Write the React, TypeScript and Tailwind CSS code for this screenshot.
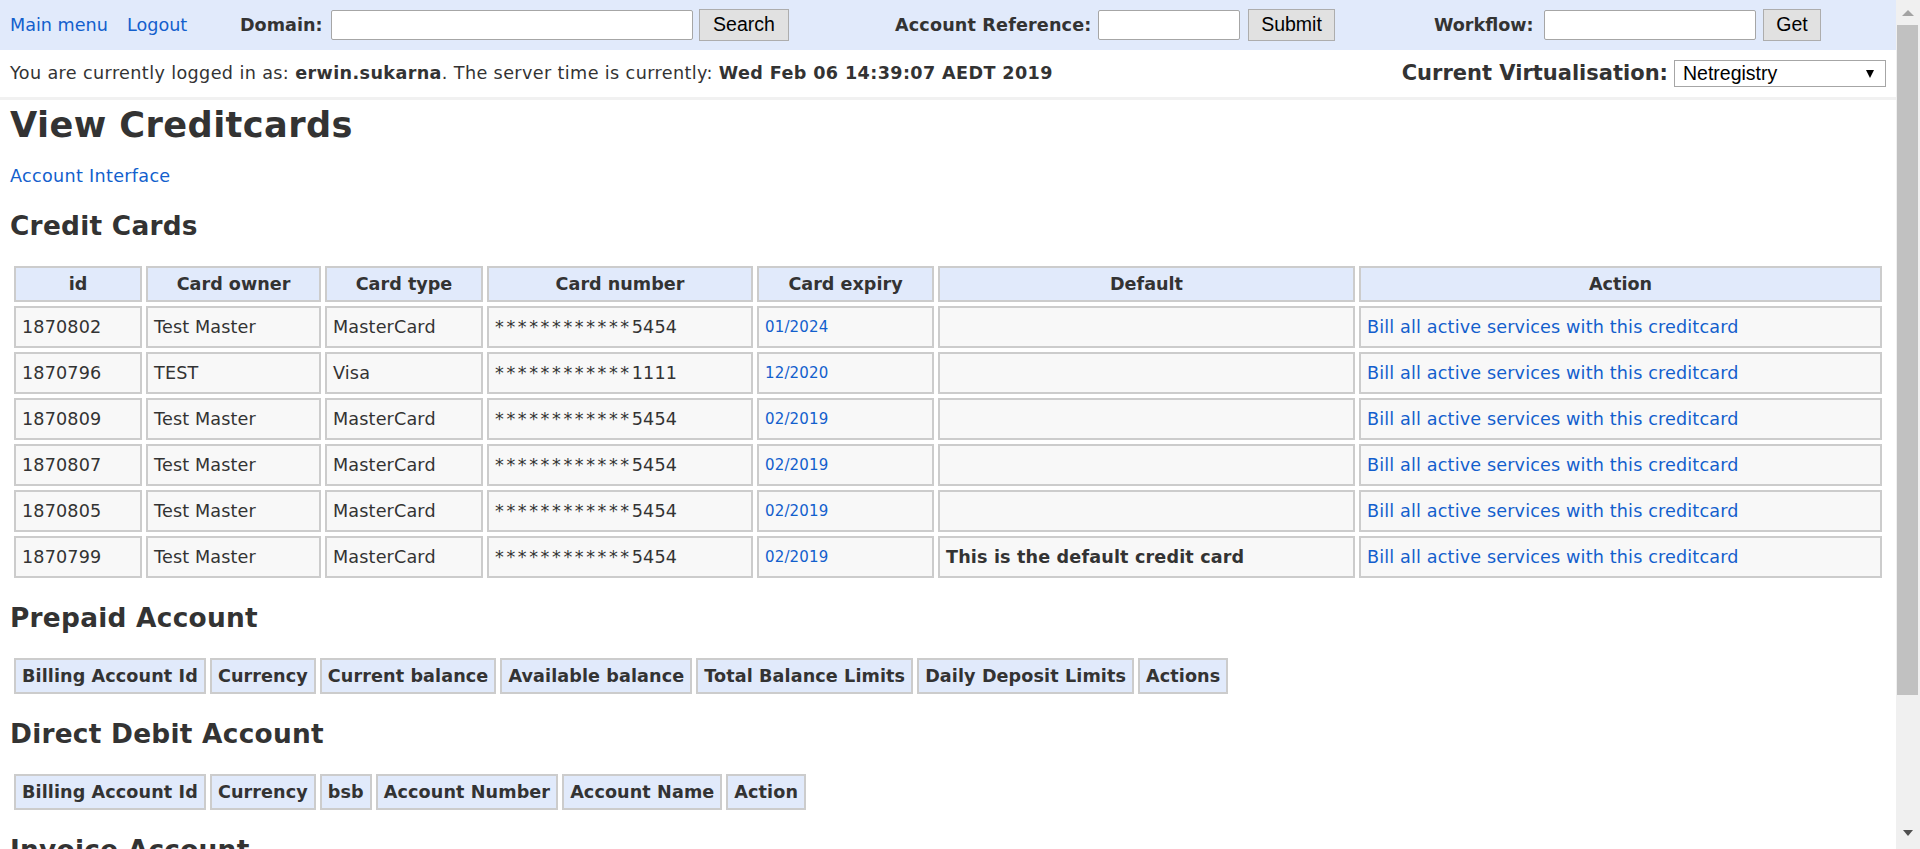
import React from "react";

const rows = [
  { id: "1870802", owner: "Test Master", type: "MasterCard", num: "5454", exp: "01/2024", def: "" },
  { id: "1870796", owner: "TEST", type: "Visa", num: "1111", exp: "12/2020", def: "" },
  { id: "1870809", owner: "Test Master", type: "MasterCard", num: "5454", exp: "02/2019", def: "" },
  { id: "1870807", owner: "Test Master", type: "MasterCard", num: "5454", exp: "02/2019", def: "" },
  { id: "1870805", owner: "Test Master", type: "MasterCard", num: "5454", exp: "02/2019", def: "" },
  { id: "1870799", owner: "Test Master", type: "MasterCard", num: "5454", exp: "02/2019", def: "This is the default credit card" },
];

const headers = ["id", "Card owner", "Card type", "Card number", "Card expiry", "Default", "Action"];

function HeadCell({ children }: { children: React.ReactNode }) {
  return (
    <div className="h-[36px] px-[6px] border-2 border-[#cccccc] bg-[#e1eafb] font-bold tracking-[0.1px] flex items-center whitespace-nowrap">
      {children}
    </div>
  );
}

function Button({ label, w }: { label: string; w: string }) {
  return (
    <div
      className={`${w} h-[32px] border border-[#adadad] bg-[#e1e1e1] flex items-center justify-center text-[19.5px] text-black`}
      style={{ fontFamily: '"Liberation Sans", Arial, sans-serif' }}
    >
      {label}
    </div>
  );
}

function Input({ w }: { w: string }) {
  return <div className={`${w} h-[30px] border border-[#a6a6a6] rounded-[2px] bg-white`} />;
}

const cell = "h-[42px] border-2 border-[#cccccc] bg-[#f8f8f8] px-[6px] flex items-center whitespace-nowrap tracking-[0.15px]";

export default function App() {
  return (
    <div
      className="flex w-[1920px] h-[849px] overflow-hidden bg-white text-[#333333] text-[17.6px]"
      style={{ fontFamily: '"DejaVu Sans", Verdana, sans-serif' }}
    >
      <div className="flex-1 min-w-0 h-[849px] overflow-hidden">
        {/* Top bar */}
        <div className="h-[50px] bg-[#e1eafb] flex items-center">
          <div className="w-[240px] pl-[10px] flex items-center whitespace-nowrap">
            <a className="w-[117px] text-[#135fcd]">Main menu</a>
            <a className="text-[#135fcd]">Logout</a>
          </div>
          <div className="w-[655px] flex items-center">
            <span className="w-[91px] font-bold whitespace-nowrap">Domain:</span>
            <Input w="w-[362px]" />
            <div className="w-[6px]" />
            <Button label="Search" w="w-[90px]" />
          </div>
          <div className="w-[539px] flex items-center">
            <span className="w-[203px] font-bold whitespace-nowrap tracking-[0.15px]">Account Reference:</span>
            <Input w="w-[142px]" />
            <div className="w-[8px]" />
            <Button label="Submit" w="w-[87px]" />
          </div>
          <div className="flex items-center">
            <span className="w-[110px] font-bold whitespace-nowrap">Workflow:</span>
            <Input w="w-[212px]" />
            <div className="w-[7px]" />
            <Button label="Get" w="w-[58px]" />
          </div>
        </div>

        {/* Login info line */}
        <div className="h-[50px] px-[10px] flex items-center justify-between border-b-[3px] border-[#f1f1f1]">
          <div className="whitespace-nowrap tracking-[0.38px]">
            You are currently logged in as: <b>erwin.sukarna</b>. The server time is currently:{" "}
            <b>Wed Feb 06 14:39:07 AEDT 2019</b>
          </div>
          <div className="flex items-center">
            <span className="font-bold text-[21px] whitespace-nowrap">Current Virtualisation:</span>
            <div
              className="ml-[6px] w-[212px] h-[27px] border border-[#a6a6a6] bg-white flex items-center justify-between pl-[8px] pr-[11px] text-[19.5px] text-black"
              style={{ fontFamily: '"Liberation Sans", Arial, sans-serif' }}
            >
              <span>Netregistry</span>
              <svg width="8" height="8" viewBox="0 0 8 8">
                <polygon points="0,0 8,0 4,8" fill="#000" />
              </svg>
            </div>
          </div>
        </div>

        <div className="px-[10px]">
          <h1 className="mt-[3px] text-[35.2px] leading-[43px] font-bold tracking-[0.4px]">View Creditcards</h1>
          <p className="mt-[20px] leading-[21px]">
            <a className="text-[#135fcd] tracking-[0.3px]">Account Interface</a>
          </p>
          <h2 className="mt-[23px] text-[26.4px] leading-[32px] font-bold tracking-[0.25px]">Credit Cards</h2>

          <div className="mt-[24px] mx-[4px] grid grid-cols-[128px_175px_158px_266px_177px_417px_523px] gap-[4px]">
            {headers.map((h) => (
              <div
                key={h}
                className="h-[36px] border-2 border-[#cccccc] bg-[#e1eafb] font-bold flex items-center justify-center whitespace-nowrap"
              >
                {h}
              </div>
            ))}
            {rows.map((r) => (
              <React.Fragment key={r.id}>
                <div className={cell}>{r.id}</div>
                <div className={cell}>{r.owner}</div>
                <div className={cell}>{r.type}</div>
                <div className={cell}>
                  <span className="tracking-[2.6px]">************</span>
                  <span>{r.num}</span>
                </div>
                <div className={cell}>
                  <a className="text-[#135fcd] text-[15px]">{r.exp}</a>
                </div>
                <div className={`${cell} font-bold`}>{r.def}</div>
                <div className={cell}>
                  <a className="text-[#135fcd]">Bill all active services with this creditcard</a>
                </div>
              </React.Fragment>
            ))}
          </div>

          <h2 className="mt-[24px] text-[26.4px] leading-[32px] font-bold tracking-[0.25px]">Prepaid Account</h2>
          <div className="mt-[24px] ml-[4px] flex gap-[4px]">
            {["Billing Account Id", "Currency", "Current balance", "Available balance", "Total Balance Limits", "Daily Deposit Limits", "Actions"].map((h) => (
              <HeadCell key={h}>{h}</HeadCell>
            ))}
          </div>

          <h2 className="mt-[24px] text-[26.4px] leading-[32px] font-bold tracking-[0.25px]">Direct Debit Account</h2>
          <div className="mt-[24px] ml-[4px] flex gap-[4px]">
            {["Billing Account Id", "Currency", "bsb", "Account Number", "Account Name", "Action"].map((h) => (
              <HeadCell key={h}>{h}</HeadCell>
            ))}
          </div>

          <h2 className="mt-[24px] text-[26.4px] leading-[32px] font-bold tracking-[0.25px]">Invoice Account</h2>
        </div>
      </div>

      {/* Scrollbar */}
      <div className="w-[24px] h-[849px] bg-[#f0f0f0] flex flex-col items-center">
        <div className="h-[25px] w-full flex items-center justify-center">
          <svg width="12" height="6" viewBox="0 0 12 6">
            <polygon points="0,6 12,6 6,0" fill="#a3a3a3" />
          </svg>
        </div>
        <div className="w-[21px] ml-[-1px] h-[670px] bg-[#c1c1c1]" />
        <div className="flex-1" />
        <div className="h-[25px] w-full flex items-center justify-center mb-[4px]">
          <svg width="10" height="6" viewBox="0 0 10 6">
            <polygon points="0,0 10,0 5,6" fill="#505050" />
          </svg>
        </div>
      </div>
    </div>
  );
}
